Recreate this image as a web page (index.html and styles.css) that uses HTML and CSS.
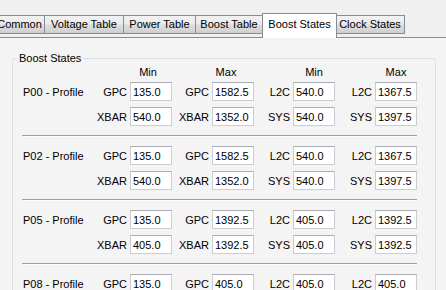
FILE: index.html
```html
<!DOCTYPE html>
<html lang="en">
<head>
    <meta charset="UTF-8">
    <title>Boost States</title>
    <link rel="stylesheet" href="styles.css">
</head>
<body>

<div class="tabs">
    <div class="tab tab-common">Common</div>
    <div class="tab tab-voltage">Voltage Table</div>
    <div class="tab tab-power">Power Table</div>
    <div class="tab tab-boost">Boost Table</div>
    <div class="tab tab-states selected">Boost States</div>
    <div class="tab tab-clock">Clock States</div>
</div>

<div class="page">
    <fieldset class="group">
        <legend>Boost States</legend>

        <div class="grid head">
            <span></span>
            <span></span><span class="hd hd1">Min</span>
            <span></span><span class="hd hd2">Max</span>
            <span></span><span class="hd">Min</span>
            <span></span><span class="hd">Max</span>
        </div>

        <div class="grid block">
            <span class="profile">P00 - Profile</span>
            <label>GPC</label><input type="text" value="135.0">
            <label>GPC</label><input type="text" value="1582.5">
            <label>L2C</label><input type="text" value="540.0">
            <label>L2C</label><input type="text" value="1367.5">
            <span></span>
            <label>XBAR</label><input type="text" value="540.0">
            <label>XBAR</label><input type="text" value="1352.0">
            <label>SYS</label><input type="text" value="540.0">
            <label>SYS</label><input type="text" value="1397.5">
        </div>
        <div class="sep"></div>

        <div class="grid block">
            <span class="profile">P02 - Profile</span>
            <label>GPC</label><input type="text" value="135.0">
            <label>GPC</label><input type="text" value="1582.5">
            <label>L2C</label><input type="text" value="540.0">
            <label>L2C</label><input type="text" value="1367.5">
            <span></span>
            <label>XBAR</label><input type="text" value="540.0">
            <label>XBAR</label><input type="text" value="1352.0">
            <label>SYS</label><input type="text" value="540.0">
            <label>SYS</label><input type="text" value="1397.5">
        </div>
        <div class="sep"></div>

        <div class="grid block">
            <span class="profile">P05 - Profile</span>
            <label>GPC</label><input type="text" value="135.0">
            <label>GPC</label><input type="text" value="1392.5">
            <label>L2C</label><input type="text" value="405.0">
            <label>L2C</label><input type="text" value="1392.5">
            <span></span>
            <label>XBAR</label><input type="text" value="405.0">
            <label>XBAR</label><input type="text" value="1392.5">
            <label>SYS</label><input type="text" value="405.0">
            <label>SYS</label><input type="text" value="1392.5">
        </div>
        <div class="sep"></div>

        <div class="grid block">
            <span class="profile">P08 - Profile</span>
            <label>GPC</label><input type="text" value="135.0">
            <label>GPC</label><input type="text" value="405.0">
            <label>L2C</label><input type="text" value="405.0">
            <label>L2C</label><input type="text" value="405.0">
            <span></span>
            <label>XBAR</label><input type="text" value="405.0">
            <label>XBAR</label><input type="text" value="405.0">
            <label>SYS</label><input type="text" value="405.0">
            <label>SYS</label><input type="text" value="405.0">
        </div>
    </fieldset>
</div>

</body>
</html>
```

FILE: styles.css
```css
html, body {
    margin: 0;
    height: 100%;
    overflow: hidden;
}
body {
    font-family: "Liberation Sans", Arial, sans-serif;
    font-size: 11px;
    color: #000;
    background: #f0f0f0;
}
.tabs {
    display: flex;
    align-items: flex-start;
    height: 24px;
    margin-top: 13px;
    margin-left: -6px;
}
.tab {
    box-sizing: border-box;
    height: 19px;
    margin-top: 2px;
    line-height: 17px;
    text-align: center;
    white-space: nowrap;
    border: 1px solid #898c95;
    border-left: none;
    background: linear-gradient(#f2f2f2, #ebebeb 45%, #dddddd 55%, #cfcfcf);
}
.tab-common { width: 51px; border-left: 1px solid #898c95; }
.tab-voltage { width: 79px; }
.tab-power { width: 72px; }
.tab-boost { width: 67px; }
.tab-states { width: 75px; }
.tab-clock { width: 69px; }
.tab.selected {
    position: relative;
    z-index: 1;
    height: 25px;
    margin-top: 0;
    margin-left: -1px;
    margin-right: -1px;
    line-height: 20px;
    border-left: 1px solid #898c95;
    border-bottom: none;
    background: #ffffff;
}
.page {
    border-top: 1px solid #898c95;
    background: #f4f4f4;
    height: 300px;
}
.group {
    width: 424px;
    box-sizing: border-box;
    margin: 13px 0 0 12px;
    padding: 0 0 0 10px;
    border: 1px solid #d5dfe5;
    border-radius: 3px;
}
.group legend {
    margin-left: -6px;
    padding: 0 2px;
    line-height: 14px;
}
.grid {
    display: grid;
    grid-template-columns: 69px 38px 42px 40px 42px 39px 42px 40px 42px;
}
.head {
    height: 17px;
    line-height: 14px;
}
.hd {
    text-align: center;
}
.hd1 { margin-left: -6px; }
.hd2 { margin-left: -14px; }
.block {
    grid-template-rows: 19px 19px;
    row-gap: 6px;
    align-items: center;
}
.profile {
    white-space: nowrap;
}
.block label {
    text-align: right;
    padding-right: 3px;
}
.block input {
    box-sizing: border-box;
    width: 42px;
    height: 19px;
    margin: 0;
    padding: 0 0 0 2px;
    font: inherit;
    border: 1px solid #c9ccd2;
    border-top-color: #abadb3;
    background: #ffffff;
}
.sep {
    width: 395px;
    margin: 9px 0 9px -1px;
    border-top: 1px solid #a0a0a0;
    border-bottom: 1px solid #ffffff;
}
```
